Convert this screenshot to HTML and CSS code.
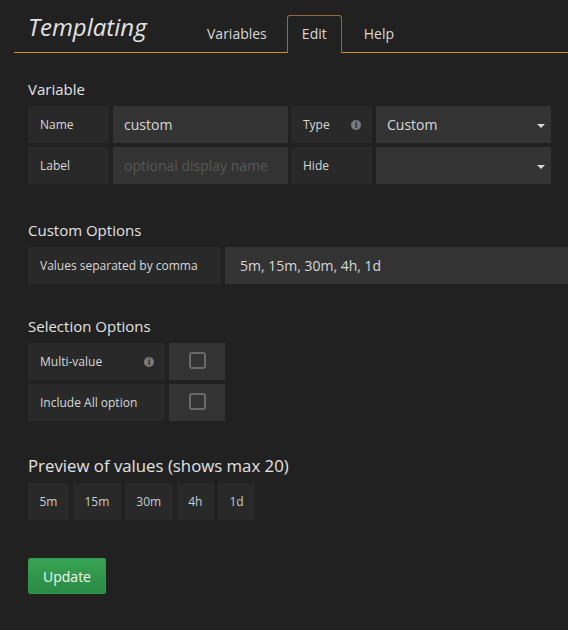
FILE: index.html
```html
<!DOCTYPE html>
<html lang="en">
<head>
    <meta charset="UTF-8" />
    <title>Templating</title>
    <link rel="stylesheet" href="styles.css">
</head>
<body>
    <div class="tabbed-header">
        <h1 class="tabbed-title">Templating</h1>
        <ul class="tabs">
            <li class="tab">Variables</li>
            <li class="tab active">Edit</li>
            <li class="tab">Help</li>
        </ul>
    </div>

    <div class="editor">
        <h5 class="section-heading">Variable</h5>
        <div class="form-row">
            <span class="form-label w-name">Name</span>
            <span class="form-input w-input">custom</span>
            <span class="form-label w-name with-info">Type <span class="info">i</span></span>
            <span class="form-input w-input select">Custom</span>
        </div>
        <div class="form-row">
            <span class="form-label w-name">Label</span>
            <span class="form-input w-input placeholder">optional display name</span>
            <span class="form-label w-name">Hide</span>
            <span class="form-input w-input select"></span>
        </div>

        <h5 class="section-heading custom-heading">Custom Options</h5>
        <div class="form-row">
            <span class="form-label w-values">Values separated by comma</span>
            <span class="form-input grow">5m, 15m, 30m, 4h, 1d</span>
        </div>

        <h5 class="section-heading selection-heading">Selection Options</h5>
        <div class="form-row">
            <span class="form-label w-switch with-info">Multi-value <span class="info">i</span></span>
            <span class="form-input checkbox-cell"><span class="checkbox"></span></span>
        </div>
        <div class="form-row">
            <span class="form-label w-switch">Include All option</span>
            <span class="form-input checkbox-cell"><span class="checkbox"></span></span>
        </div>

        <h5 class="section-heading preview-heading">Preview of values (shows max 20)</h5>
        <div class="form-row">
            <span class="form-label chip">5m</span>
            <span class="form-label chip">15m</span>
            <span class="form-label chip">30m</span>
            <span class="form-label chip">4h</span>
            <span class="form-label chip">1d</span>
        </div>

        <div class="actions">
            <button class="btn-success">Update</button>
        </div>
    </div>
</body>
</html>
```

FILE: styles.css
```css
body {
    font-family: "Open Sans", "Liberation Sans", sans-serif;
    background-color: #212121;
    color: #d8d9da;
    margin: 0;
    padding: 0;
    overflow: hidden;
}
.tabbed-header {
    display: flex;
    align-items: flex-end;
    margin: 15px 0 0 14px;
    border-bottom: 1px solid #c9962a;
    height: 37px;
}
.tabbed-title {
    font-style: italic;
    font-weight: 400;
    font-size: 24px;
    color: #e3e3e3;
    margin: 0 0 0 14px;
    align-self: flex-start;
    line-height: 24px;
    width: 162px;
}
.tabs {
    list-style: none;
    display: flex;
    margin: 0;
    padding: 0;
    height: 37px;
}
.tab {
    font-size: 14px;
    color: #d8d9da;
    padding: 0 16px;
    margin-right: 3px;
    line-height: 36px;
    height: 37px;
    box-sizing: border-box;
    border: 1px solid transparent;
    border-bottom: 0;
    margin-bottom: -1px;
}
.tab:last-child {
    padding-left: 18px;
}
.tab.active {
    width: 55px;
    text-align: center;
    padding: 0;
    border-color: #9a6a3c;
    border-radius: 3px 3px 0 0;
    background-color: #212121;
    height: 38px;
}
.editor {
    padding: 0 0 0 28px;
}
.section-heading {
    font-size: 15px;
    font-weight: 400;
    color: #e3e3e3;
    margin: 26px 0 7px 0;
    line-height: 20px;
}
.custom-heading {
    margin-top: 36px;
}
.selection-heading {
    margin-top: 32px;
}
.preview-heading {
    font-size: 16.8px;
    margin-top: 35px;
}
.form-row {
    display: flex;
    margin-bottom: 4px;
    height: 37px;
}
.form-label {
    background-color: #292929;
    font-size: 12px;
    padding: 0 12px;
    display: flex;
    align-items: center;
    box-sizing: border-box;
    margin-right: 4px;
    white-space: nowrap;
}
.form-input {
    background-color: #333333;
    font-size: 14px;
    padding: 0 11px;
    display: flex;
    align-items: center;
    box-sizing: border-box;
    margin-right: 3px;
    color: #d8d9da;
    white-space: nowrap;
}
.w-name {
    width: 81px;
}
.w-input {
    width: 175px;
}
.w-values {
    width: 193px;
}
.w-switch {
    width: 137px;
}
.grow {
    flex: 1;
    padding-left: 15px;
    margin-right: 0;
}
.placeholder {
    color: #575757;
}
.select {
    position: relative;
}
.select::after {
    content: "";
    position: absolute;
    right: 6px;
    top: 18px;
    border-left: 4px solid transparent;
    border-right: 4px solid transparent;
    border-top: 4px solid #d8d9da;
}
.with-info {
    justify-content: space-between;
}
.info {
    display: inline-flex;
    width: 10px;
    height: 10px;
    border-radius: 50%;
    background-color: #7b7b7b;
    color: #292929;
    font-size: 9px;
    font-weight: 700;
    align-items: center;
    justify-content: center;
    line-height: 1;
    margin-right: -1px;
}
.checkbox-cell {
    width: 56px;
    justify-content: center;
    padding: 0;
}
.checkbox {
    width: 17px;
    height: 17px;
    border: 2px solid #6a6a6a;
    border-radius: 3px;
    box-sizing: border-box;
    margin-top: -3px;
}
.chip {
    color: #c8cdd3;
    justify-content: center;
    padding: 0 11.5px;
    min-width: 37px;
}
.actions {
    margin-top: 38px;
}
.btn-success {
    font-family: "Open Sans", "Liberation Sans", sans-serif;
    font-size: 14px;
    color: #f2f7f2;
    background: linear-gradient(to bottom, #37a354, #2b8a44);
    border: 1px solid #2f9a48;
    border-radius: 2px;
    width: 78px;
    height: 36px;
    padding: 0;
}
```
